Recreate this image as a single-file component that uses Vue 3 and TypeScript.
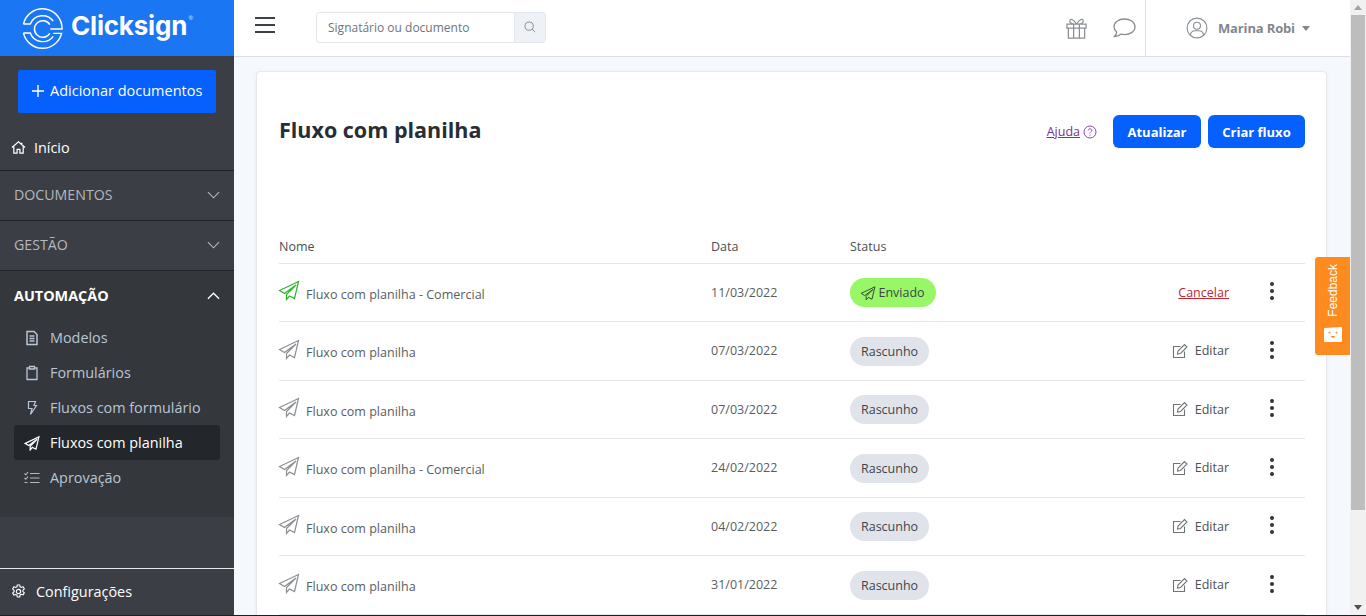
<script setup lang="ts">
interface Flow {
  name: string
  date: string
  status: 'Enviado' | 'Rascunho'
}

const flows: Flow[] = [
  { name: 'Fluxo com planilha - Comercial', date: '11/03/2022', status: 'Enviado' },
  { name: 'Fluxo com planilha', date: '07/03/2022', status: 'Rascunho' },
  { name: 'Fluxo com planilha', date: '07/03/2022', status: 'Rascunho' },
  { name: 'Fluxo com planilha - Comercial', date: '24/02/2022', status: 'Rascunho' },
  { name: 'Fluxo com planilha', date: '04/02/2022', status: 'Rascunho' },
  { name: 'Fluxo com planilha', date: '31/01/2022', status: 'Rascunho' }
]

const planePath = 'M20.5 2.500 1.500 11.500 6.500 14.500 18 6 8.500 15.500 8.500 20.500 11.500 17 16.500 19.500Z'
</script>

<template>
  <div class="app">
    <aside class="sidebar">
      <div class="brand">
        <svg class="brand-mark" viewBox="0 0 44 44" fill="none" stroke="#fff" stroke-width="1.500">
          <path d="M2.500 17.500A20 20 0 0 1 42 22.500H30" />
          <path d="M2.500 26.500A20 20 0 0 0 41.500 27H33" />
          <path d="M2.500 17.500H9.500A13.500 13.500 0 0 1 33 14.500" />
          <path d="M2.500 26.500H9.500A13.500 13.500 0 0 0 33 30" />
          <path d="M29.500 18A8.500 8.500 0 1 0 29.500 27" />
        </svg>
        <span class="brand-name">Clicksign</span>
        <span class="brand-reg">®</span>
      </div>

      <div class="add-wrap">
        <button class="add-btn">
          <svg viewBox="0 0 12 12" width="12" height="12" stroke="#fff" stroke-width="1.400"><path d="M6 0v12M0 6h12" /></svg>
          <span class="add-label">Adicionar documentos</span>
        </button>
      </div>

      <a class="home-link">
        <svg viewBox="0 0 16 16" width="15" height="15" fill="none" stroke="#fff" stroke-width="1.300">
          <path d="M1 8 8 2l7 6M3 7v7h3.500v-4h3v4H13V7M11.500 3v2" />
        </svg>
        Início
      </a>

      <div class="section">
        <span>DOCUMENTOS</span>
        <svg viewBox="0 0 14 8" width="13" height="8" fill="none" stroke="#b4b8bd" stroke-width="1.200"><path d="m1 1 6 6 6-6" /></svg>
      </div>
      <div class="section">
        <span>GESTÃO</span>
        <svg viewBox="0 0 14 8" width="13" height="8" fill="none" stroke="#b4b8bd" stroke-width="1.200"><path d="m1 1 6 6 6-6" /></svg>
      </div>

      <div class="automation">
        <div class="section section--open">
          <span>AUTOMAÇÃO</span>
          <svg viewBox="0 0 14 8" width="13" height="8" fill="none" stroke="#fff" stroke-width="1.400"><path d="m1 7 6-6 6 6" /></svg>
        </div>
        <nav class="subnav">
          <a class="subnav-item">
            <svg viewBox="0 0 14 16" fill="none" stroke="#b9c5d4" stroke-width="1.500">
              <path d="M2 1.500h7l3 3v10H2zM4.500 6h5M4.500 8.500h5M4.500 11h5" />
            </svg>
            Modelos
          </a>
          <a class="subnav-item">
            <svg viewBox="0 0 14 16" fill="none" stroke="#b9c5d4" stroke-width="1.300">
              <path d="M4.500 3H2v11.500h10V3H9.500M4.500 1.500h5V4h-5z" />
            </svg>
            Formulários
          </a>
          <a class="subnav-item">
            <svg viewBox="0 0 14 16" fill="none" stroke="#b9c5d4" stroke-width="1.200">
              <path d="M3.500 1.500h7L9 5.500h2.500L5.500 14.500 7 8.500H3.500z" />
            </svg>
            Fluxos com formulário
          </a>
          <a class="subnav-item subnav-item--active">
            <svg viewBox="0 0 22 22" fill="none" stroke="#fff" stroke-width="1.700">
              <path :d="planePath" />
            </svg>
            Fluxos com planilha
          </a>
          <a class="subnav-item">
            <svg viewBox="0 0 16 14" fill="none" stroke="#b0bac5" stroke-width="1.100">
              <path d="M6 2.500h9.500M6 7h9.500M6 11.500h9.500M.5 2.500l1.300 1.300L4 1.200M.5 7l1.300 1.300L4 5.700M.5 11.500h3" />
            </svg>
            Aprovação
          </a>
        </nav>
      </div>

      <a class="settings">
        <svg viewBox="0 0 16 16" width="15" height="15" fill="none" stroke="#fff" stroke-width="1.200">
          <circle cx="8" cy="8" r="2.300" />
          <path d="M6.700 1h2.600l.4 2 1.300.7 1.900-.7 1.300 2.300-1.500 1.300v1.500l1.500 1.300-1.300 2.200-1.900-.6-1.300.7-.4 2.100H6.700l-.4-2.100L5 11.200l-1.900.6-1.300-2.200 1.500-1.300V6.800L1.800 5.300 3.100 3l1.900.7L6.300 3z" />
        </svg>
        Configurações
      </a>
    </aside>

    <div class="main">
      <header class="topbar">
        <button class="burger" aria-label="Menu"><i></i><i></i><i></i></button>
        <div class="search">
          <span class="search-input">Signatário ou documento</span>
          <span class="search-btn">
            <svg viewBox="0 0 14 14" width="12" height="12" fill="none" stroke="#7d8a96" stroke-width="1.100">
              <circle cx="6" cy="6" r="4.800" /><path d="m9.500 9.500 3.500 3.500" />
            </svg>
          </span>
        </div>
        <div class="top-icons">
          <svg viewBox="0 0 24 24" width="23" height="23" fill="none" stroke="#8a8f94" stroke-width="1.300">
            <path d="M2 7.500h20v4H2zM3.500 11.500V22h17V11.500M9 7.500V22M15 7.500V22M12 7.500C9 2 5 1 5 4.500c0 2 3 3 7 3zM12 7.500C15 2 19 1 19 4.500c0 2-3 3-7 3z" />
          </svg>
          <svg viewBox="0 0 24 22" width="24" height="22" fill="none" stroke="#8a8f94" stroke-width="1.300">
            <path d="M12.500 2C6.500 2 2 5.300 2 9.800c0 2.200 1 4 2.700 5.300-.2 1.700-1 3.200-2.200 4.400 2.500-.2 4.700-1.200 6.300-2.300 1.200.3 2.400.4 3.700.4 6 0 10.500-3.300 10.500-7.800S18.500 2 12.500 2z" />
          </svg>
        </div>
        <div class="user">
          <svg viewBox="0 0 24 24" width="22" height="22" fill="none" stroke="#8a8f94" stroke-width="1.200">
            <circle cx="12" cy="12" r="10.800" />
            <circle cx="12" cy="9.500" r="3.800" />
            <path d="M4.800 19.500c.6-3 2.500-4.500 4.700-4.500h5c2.200 0 4.100 1.500 4.700 4.500" />
          </svg>
          <span class="user-name">Marina Robi</span>
          <span class="caret"></span>
        </div>
      </header>

      <main class="content">
        <section class="card">
          <div class="card-head">
            <h1>Fluxo com planilha</h1>
            <div class="card-actions">
              <a class="help">Ajuda</a>
              <svg class="help-icon" viewBox="0 0 14 14" width="14" height="14" fill="none" stroke="#8e44ad" stroke-width="1">
                <circle cx="7" cy="7" r="6" />
                <path d="M5.200 5.500c0-2.300 3.600-2.300 3.600-.2 0 1.400-1.800 1.500-1.800 3M7 9.500v1.200" />
              </svg>
              <button class="btn">Atualizar</button>
              <button class="btn">Criar fluxo</button>
            </div>
          </div>

          <div class="row row--head">
            <span class="col-name">Nome</span>
            <span class="col-date">Data</span>
            <span class="col-status">Status</span>
          </div>

          <div v-for="(flow, i) in flows" :key="i" class="row">
            <span class="col-name name-cell">
              <svg
                class="flow-icon"
                viewBox="0 0 22 22"
                width="22"
                height="22"
                fill="none"
                :stroke="flow.status === 'Enviado' ? '#2bb52b' : '#8b8f93'"
                stroke-width="1.200"
              >
                <path :d="planePath" />
              </svg>
              <span class="flow-name">{{ flow.name }}</span>
            </span>
            <span class="col-date date-cell">{{ flow.date }}</span>
            <span class="col-status">
              <span class="badge" :class="flow.status === 'Enviado' ? 'badge--sent' : 'badge--draft'">
                <svg
                  v-if="flow.status === 'Enviado'"
                  viewBox="0 0 22 22"
                  width="16"
                  height="16"
                  fill="none"
                  stroke="#33413a"
                  stroke-width="1.300"
                >
                  <path :d="planePath" />
                </svg>
                {{ flow.status }}
              </span>
            </span>
            <span class="col-action">
              <a v-if="flow.status === 'Enviado'" class="cancel">Cancelar</a>
              <a v-else class="edit">
                <svg viewBox="0 0 16 16" width="16" height="16" fill="none" stroke="#6f7479" stroke-width="1.100">
                  <path d="M12.500 8.500v6h-11v-11h7M6 8l-.5 3 3-.5 6.500-6.500L12.500 1.500z" />
                </svg>
                Editar
              </a>
            </span>
            <span class="col-more" aria-label="Mais"><i></i><i></i><i></i></span>
          </div>
        </section>
      </main>

      <aside class="feedback">
        <span class="feedback-text">Feedback</span>
        <svg viewBox="0 0 18 16" width="18" height="15" preserveAspectRatio="none">
          <path d="M1 1 17 0a1 1 0 0 1 1 1v14a1 1 0 0 1-1 1H1a1 1 0 0 1-1-1V2a1 1 0 0 1 1-1z" fill="#fff" />
          <circle cx="5.500" cy="6" r="1" fill="#fd8b1f" />
          <circle cx="12.500" cy="6" r="1" fill="#fd8b1f" />
          <path d="M6.500 9.500h5L9 12z" fill="#fd8b1f" />
        </svg>
      </aside>
    </div>

    <div class="scrollbar">
      <span class="scroll-up"></span>
      <span class="scroll-thumb"></span>
      <span class="scroll-down"></span>
    </div>
  </div>
</template>

<style>
html,
body {
  margin: 0;
  overflow: hidden;
}
</style>

<style scoped>
.app {
  display: flex;
  width: 1366px;
  height: 616px;
  box-sizing: border-box;
  overflow: hidden;
  position: relative;
  font-family: "Open Sans", "Liberation Sans", sans-serif;
  color: #343a40;
  background: #f5f8fc;
  border-bottom: 1px solid #1c2024;
}

/* Sidebar */
.sidebar {
  width: 234px;
  flex: none;
  display: flex;
  flex-direction: column;
  background: #3b3e44;
  color: #fff;
  font-size: 14.400px;
}

.brand {
  height: 56px;
  flex: none;
  display: flex;
  align-items: center;
  padding-left: 21px;
  background: #1a76f2;
}

.brand-mark {
  width: 43px;
  height: 43px;
  margin-right: 7px;
}

.brand-name {
  margin-top: -6px;
  font-family: Inter, "Open Sans", sans-serif;
  font-size: 26px;
  font-weight: 700;
  letter-spacing: -0.2px;
}

.brand-reg {
  font-size: 6px;
  margin: -20px 0 0 1px;
  color: #cfe0fb;
}

.add-wrap {
  padding: 14px 18px 0;
}

.add-btn {
  width: 198px;
  height: 43px;
  display: flex;
  align-items: center;
  gap: 6px;
  padding: 0 0 2px 14px;
  box-sizing: border-box;
  border: none;
  border-radius: 2px;
  background: #0560fd;
  color: #fff;
  font-family: inherit;
  font-size: 14.500px;
}

.home-link {
  height: 58px;
  flex: none;
  display: flex;
  align-items: center;
  gap: 8px;
  padding: 12px 0 0 11px;
  box-sizing: border-box;
  border-bottom: 1px solid #1f2226;
}

.section {
  height: 50px;
  flex: none;
  display: flex;
  align-items: center;
  justify-content: space-between;
  padding: 0 14px 2px;
  box-sizing: border-box;
  font-size: 14.200px;
  color: #b4b8bd;
  border-bottom: 1px solid #1f2226;
}

.section--open {
  height: 49px;
  padding-bottom: 0;
  color: #fff;
  font-size: 14.400px;
  font-weight: 700;
  border-bottom: none;
}

.automation {
  height: 246px;
  flex: none;
  background: #34383c;
}

.subnav {
  display: flex;
  flex-direction: column;
  padding: 0 14px;
}

.subnav-item {
  height: 35px;
  display: flex;
  align-items: center;
  gap: 10px;
  padding-left: 10px;
  box-sizing: border-box;
  color: #b9c5d4;
  border-radius: 3px;
}

.subnav-item svg {
  flex: none;
  width: 16px;
  height: 16px;
}

.subnav-item--active {
  background: #23262a;
  color: #fff;
}

.settings {
  margin-top: auto;
  height: 47px;
  flex: none;
  display: flex;
  align-items: center;
  gap: 10px;
  padding: 0 0 2px 11px;
  box-sizing: border-box;
  border-top: 1px solid #e4e6ea;
}

/* Topbar */
.main {
  flex: 1;
  min-width: 0;
  display: flex;
  flex-direction: column;
  position: relative;
}

.topbar {
  height: 57px;
  flex: none;
  display: flex;
  align-items: center;
  box-sizing: border-box;
  background: #fff;
  border-bottom: 1px solid #dbdfe6;
}

.burger {
  width: 20px;
  height: 16px;
  margin: -6px 0 0 21px;
  padding: 0;
  border: none;
  background: none;
  display: flex;
  flex-direction: column;
  justify-content: space-between;
}

.burger i {
  display: block;
  height: 2px;
  background: #3d4044;
}

.search {
  width: 230px;
  height: 31px;
  margin-left: 41px;
  margin-top: -2px;
  display: flex;
  border: 1px solid #e3e6ec;
  border-radius: 3px;
  box-sizing: border-box;
  overflow: hidden;
}

.search-input {
  flex: 1;
  padding-left: 11px;
  font-size: 12px;
  line-height: 29px;
  color: #6d7680;
}

.search-btn {
  width: 30px;
  display: flex;
  align-items: center;
  justify-content: center;
  background: #eef2f6;
  border-left: 1px solid #e3e6ec;
}

.top-icons {
  margin-left: auto;
  display: flex;
  align-items: center;
  gap: 24px;
  padding-right: 9px;
}

.user {
  width: 205px;
  height: 56px;
  display: flex;
  align-items: center;
  box-sizing: border-box;
  padding-left: 40px;
  border-left: 1px solid #dbdfe6;
}

.user-name {
  margin-left: 10px;
  font-size: 13px;
  font-weight: 700;
  letter-spacing: -0.150px;
  color: #82878d;
}

.caret {
  margin-left: 7px;
  border-left: 4px solid transparent;
  border-right: 4px solid transparent;
  border-top: 5px solid #82878d;
}

/* Card */
.content {
  flex: 1;
  min-height: 0;
  padding: 14px 23px 0 22px;
}

.card {
  height: 600px;
  padding: 0 21px 0 22px;
  box-sizing: border-box;
  background: #fff;
  border: 1px solid #e6e8ed;
  border-radius: 4px;
  box-shadow: 0 1px 4px rgba(40, 50, 70, 0.06);
}

.card-head {
  height: 160px;
  display: flex;
  align-items: flex-start;
  justify-content: space-between;
  padding-top: 43px;
  box-sizing: border-box;
}

h1 {
  margin: 0;
  font-size: 21.500px;
  font-weight: 700;
  line-height: 30px;
  color: #282d33;
}

.card-actions {
  display: flex;
  align-items: center;
}

.help {
  margin-right: 3px;
  font-size: 12.500px;
  color: #7b2d9b;
  text-decoration: underline;
}

.help-icon {
  margin-right: 16px;
}

.btn {
  width: 97px;
  height: 33px;
  margin-left: 7px;
  padding: 0;
  border: none;
  border-radius: 6px;
  background: #0560fd;
  color: #fff;
  font-family: inherit;
  font-size: 13px;
  font-weight: 700;
}

.help-icon + .btn {
  width: 88px;
  margin-left: 0;
}

.row {
  height: 58.500px;
  display: flex;
  align-items: center;
  border-bottom: 1px solid #e3e5e8;
  box-sizing: border-box;
  font-size: 12.500px;
}

.row--head {
  height: 31.500px;
  align-items: flex-start;
  padding-top: 6px;
  color: #4a4f55;
}

.col-name {
  width: 432px;
  flex: none;
}

.col-date {
  width: 139px;
  flex: none;
}

.col-status {
  width: 200px;
  flex: none;
}

.name-cell {
  display: flex;
  align-items: center;
  gap: 6px;
}

.flow-icon {
  margin: 0 0 4px -1px;
}

.flow-name {
  margin-top: 4px;
  color: #595d62;
  font-size: 12.550px;
}

.date-cell {
  color: #595d62;
  margin-top: -0.500px;
}

.badge {
  display: inline-flex;
  align-items: center;
  gap: 3px;
  height: 29px;
  margin-top: 0.500px;
  padding: 0 11px;
  border-radius: 15px;
  color: #3f444a;
  box-sizing: border-box;
}

.badge--sent {
  background: #98f766;
  padding: 0 11px 0 9.500px;
}

.badge--draft {
  background: #e0e4ea;
}

.col-action {
  flex: 1;
  display: flex;
  justify-content: flex-end;
  margin-top: -0.500px;
}

.cancel {
  color: #c2262e;
  text-decoration: underline;
}

.edit {
  display: flex;
  align-items: center;
  gap: 7px;
  color: #4a4f55;
}

.col-more {
  width: 32px;
  flex: none;
  margin: -2px 17px 0 27px;
  display: flex;
  flex-direction: column;
  align-items: center;
  gap: 3px;
}

.col-more i {
  width: 4px;
  height: 4px;
  border-radius: 50%;
  background: #2e3338;
}

/* Feedback tab */
.feedback {
  position: absolute;
  top: 257px;
  right: 0;
  width: 35px;
  height: 98px;
  display: flex;
  flex-direction: column;
  align-items: center;
  justify-content: flex-end;
  gap: 10px;
  padding-bottom: 13px;
  box-sizing: border-box;
  background: #fd8b1f;
  border-radius: 3px 0 0 3px;
}

.feedback-text {
  writing-mode: vertical-rl;
  transform: rotate(180deg);
  font-family: "Liberation Sans", sans-serif;
  font-size: 12px;
  color: #fff;
}

/* Scrollbar */
.scrollbar {
  width: 16px;
  flex: none;
  position: relative;
  background: #f1f1f1;
}

.scroll-up {
  position: absolute;
  top: 5px;
  left: 4px;
  border-left: 4px solid transparent;
  border-right: 4px solid transparent;
  border-bottom: 5px solid #a3a3a3;
}

.scroll-down {
  position: absolute;
  bottom: 5px;
  left: 4px;
  border-left: 4px solid transparent;
  border-right: 4px solid transparent;
  border-top: 5px solid #505050;
}

.scroll-thumb {
  position: absolute;
  top: 15px;
  left: 1px;
  width: 14px;
  height: 495px;
  background: #bdbdbd;
}
</style>
